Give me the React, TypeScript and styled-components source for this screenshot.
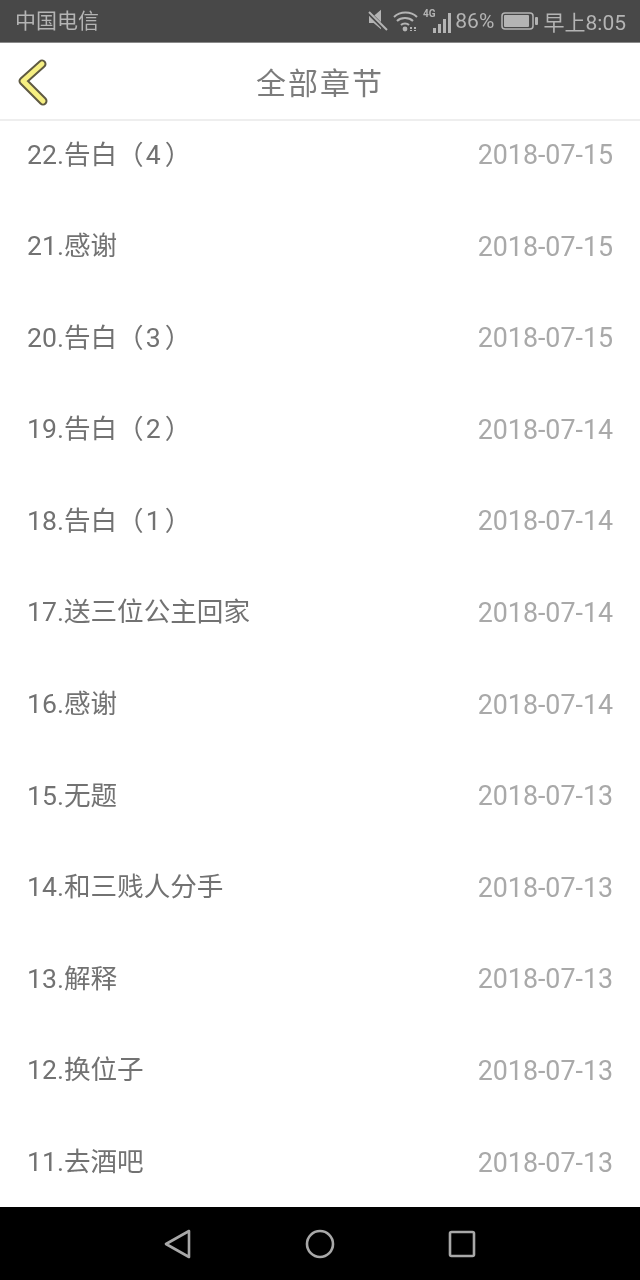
import React from 'react';
import styled, { createGlobalStyle } from 'styled-components';

const Global = createGlobalStyle`
  html, body { margin: 0; padding: 0; background: #fff; }
  body { font-family: Roboto, "Noto Sans CJK SC", sans-serif; }
`;
const Page = styled.div`
  width: 640px; height: 1280px; display: flex; flex-direction: column; overflow: hidden; background: #fff;
  will-change: transform;
`;
const StatusBar = styled.div`
  flex: none; background: #484848; border-bottom: 1px solid #8a8a8a; box-sizing: border-box; height: 43px;
  display: flex; align-items: center; justify-content: space-between; padding: 0 14px 0 15px; color: #b4b4b4;
`;
const Carrier = styled.span`font-size: 21px; line-height: 42px;`;
const StatusRight = styled.div`display: flex; align-items: center; height: 42px;`;
const MuteIcon = styled.svg`margin: 0 2px 0 -2px;`;
const WifiIcon = styled.svg`margin-left: 2px;`;
const BatteryIcon = styled.svg`margin-left: 6px;`;
const Percent = styled.span`font-size: 21px; margin-left: 2px; letter-spacing: 0.1px;`;
const Clock = styled.span`font-size: 21px; margin-left: 6px;`;
const Header = styled.header`
  height: 78px; flex: none; box-sizing: border-box; border-bottom: 2px solid #eeeeee; padding-top: 5px;
  display: flex; align-items: center; justify-content: center; position: relative;
`;
const BackIcon = styled.svg`position: absolute; left: 16px; top: 15px;`;
const Title = styled.h1`margin: 0; font-size: 30px; font-weight: 400; color: #7c7c7c; letter-spacing: 2px; line-height: 70px;`;
const List = styled.ul`
  flex: 1; min-height: 0; margin: 0; padding: 0 27px; list-style: none; overflow: hidden;
`;
const Row = styled.li`
  height: 91.6px; display: flex; justify-content: space-between; align-items: center;
  &:first-child { margin-top: -12.8px; }
`;
const Name = styled.span`font-size: 26.6px; color: #727272; padding-bottom: 4px;`;
const VolumeNumber = styled.span`margin: 0 4px 0 2px;`;
const Date = styled.span`font-size: 26.8px; color: #a9a9a9; padding-top: 2px;`;
const NavBar = styled.nav`
  height: 73px; flex: none; background: #000; display: flex; align-items: center; justify-content: center;
`;
const NavSlot = styled.div`width: 142px; display: flex; justify-content: center;`;

const chapters: [string, string | null, string][] = [
  ['22.告白', '4', '2018-07-15'],
  ['21.感谢', null, '2018-07-15'],
  ['20.告白', '3', '2018-07-15'],
  ['19.告白', '2', '2018-07-14'],
  ['18.告白', '1', '2018-07-14'],
  ['17.送三位公主回家', null, '2018-07-14'],
  ['16.感谢', null, '2018-07-14'],
  ['15.无题', null, '2018-07-13'],
  ['14.和三贱人分手', null, '2018-07-13'],
  ['13.解释', null, '2018-07-13'],
  ['12.换位子', null, '2018-07-13'],
  ['11.去酒吧', null, '2018-07-13'],
];

export default function App() {
  return (
    <Page>
      <Global />
      <StatusBar>
        <Carrier>中国电信</Carrier>
        <StatusRight>
          <MuteIcon width="22" height="24" viewBox="0 0 22 24" fill="none" stroke="#b4b4b4" strokeWidth="2">
            <path d="M3 8h4l6-5v15l-6-5H3z" fill="#b4b4b4" />
            <path d="M1 3l18 18" stroke="#484848" strokeWidth="4" />
            <path d="M2 3l18 18" />
          </MuteIcon>
          <WifiIcon width="26" height="24" viewBox="0 0 26 24" fill="none" stroke="#b4b4b4" strokeWidth="2">
            <path d="M1 8c6-6 17-6 23 0M4 12c4-4 12-4 16 0M8 16c2-2 6-2 8 0" />
            <circle cx="12" cy="20" r="2.4" fill="#b4b4b4" stroke="none" />
            <path d="M18 18v4M22 18v4" strokeDasharray="2 1" />
          </WifiIcon>
          <svg width="34" height="26" viewBox="0 0 34 26">
            <text x="4" y="9" fontSize="10" fontWeight="700" fill="#b4b4b4" fontFamily="Roboto">4G</text>
            <rect x="14" y="20" width="3" height="5" fill="#b4b4b4" />
            <rect x="19" y="16" width="3" height="9" fill="#b4b4b4" />
            <rect x="24" y="11" width="3" height="14" fill="#b4b4b4" />
            <rect x="29" y="5" width="3" height="20" fill="#b4b4b4" />
          </svg>
          <Percent>86%</Percent>
          <BatteryIcon width="37" height="18" viewBox="0 0 37 18" fill="none">
            <rect x="1" y="1" width="31" height="16" rx="3" stroke="#b4b4b4" strokeWidth="1.5" />
            <rect x="3" y="3" width="25" height="12" rx="1" fill="#b4b4b4" />
            <rect x="34" y="5" width="3" height="8" rx="1" fill="#b4b4b4" />
          </BatteryIcon>
          <Clock>早上8:05</Clock>
        </StatusRight>
      </StatusBar>
      <Header>
        <BackIcon width="32" height="48" viewBox="0 0 32 48" fill="none" strokeLinecap="round" strokeLinejoin="round">
          <path d="M26 6 L7 23 L27 43" stroke="#5f5a42" strokeWidth="9" />
          <path d="M26 6 L7 23 L27 43" stroke="#f6ef82" strokeWidth="5" />
        </BackIcon>
        <Title>全部章节</Title>
      </Header>
      <List>
        {chapters.map(([n, b, d]) => (
          <Row key={n}>
            <Name>
              {n}
              {b && <>（<VolumeNumber>{b}</VolumeNumber>）</>}
            </Name>
            <Date>{d}</Date>
          </Row>
        ))}
      </List>
      <NavBar>
        <NavSlot>
          <svg width="30" height="32" viewBox="0 0 30 32" fill="none" stroke="#a8a8a8" strokeWidth="2.6" strokeLinejoin="round">
            <path d="M26 3 L3 16 L26 29 Z" />
          </svg>
        </NavSlot>
        <NavSlot>
          <svg width="30" height="30" viewBox="0 0 30 30" fill="none" stroke="#a8a8a8" strokeWidth="2.6">
            <circle cx="15" cy="15" r="13" />
          </svg>
        </NavSlot>
        <NavSlot>
          <svg width="28" height="28" viewBox="0 0 28 28" fill="none" stroke="#a8a8a8" strokeWidth="2.6" strokeLinejoin="round">
            <rect x="2" y="2" width="24" height="24" rx="1.5" />
          </svg>
        </NavSlot>
      </NavBar>
    </Page>
  );
}
